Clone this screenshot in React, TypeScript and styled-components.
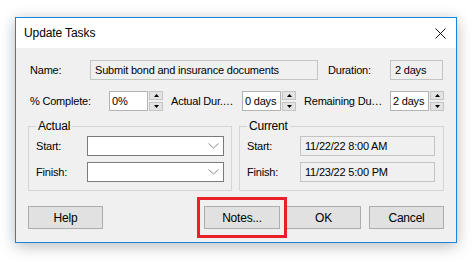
import styled, { createGlobalStyle } from "styled-components"

const GlobalStyle = createGlobalStyle`
  html, body {
    margin: 0;
    padding: 0;
    background: #ffffff;
  }
  body {
    font-family: "Liberation Sans", Arial, sans-serif;
    font-size: 11px;
    letter-spacing: -0.2px;
    color: #000;
  }
`

const Page = styled.div`
  padding: 17px 0 0 15px;
  height: 264px;
  box-sizing: border-box;
`

const Dialog = styled.div`
  width: 442px;
  height: 226px;
  box-sizing: border-box;
  border: 1px solid #1a84d8;
  background: #f0f0f0;
  box-shadow: 0 3px 14px rgba(0, 0, 0, 0.28);
  display: flex;
  flex-direction: column;
`

const TitleBar = styled.div`
  height: 30px;
  background: #ffffff;
  display: flex;
  align-items: center;
  justify-content: space-between;
  padding: 0 10px 0 8px;
  font-size: 12px;
  letter-spacing: -0.1px;
`

const Body = styled.div`
  flex: 1;
  padding: 12px 12px 0 12px;
  display: flex;
  flex-direction: column;
`

const Row = styled.div<{ $mt?: number }>`
  display: flex;
  align-items: center;
  height: 20px;
  padding-left: 2px;
  margin-top: ${p => p.$mt ?? 0}px;
`

const Label = styled.span<{ $w: number; $ml?: number }>`
  width: ${p => p.$w}px;
  margin-left: ${p => p.$ml ?? 0}px;
  white-space: nowrap;
  flex-shrink: 0;
`

const ReadOnly = styled.div<{ $w: number }>`
  width: ${p => p.$w}px;
  height: 20px;
  box-sizing: border-box;
  border: 1px solid #c4c4c4;
  background: #f0f0f0;
  padding-left: 4px;
  display: flex;
  align-items: center;
  white-space: nowrap;
  flex-shrink: 0;
`

const Spin = styled.div`
  display: flex;
  gap: 1px;
  width: 54px;
  height: 20px;
  flex-shrink: 0;
`

const SpinText = styled.div`
  width: 39px;
  box-sizing: border-box;
  border: 1px solid #b3b3b3;
  background: #fff;
  padding-left: 2px;
  display: flex;
  align-items: center;
  white-space: nowrap;
`

const SpinButtons = styled.div`
  width: 14px;
  display: flex;
  flex-direction: column;
  justify-content: space-between;
`

const SpinButton = styled.div`
  height: 9px;
  box-sizing: border-box;
  border: 1px solid #c4c4c4;
  background: #e3e3e3;
  display: flex;
  align-items: center;
  justify-content: center;
`

const Groups = styled.div`
  display: flex;
  gap: 7px;
  margin-top: 9px;
`

const Group = styled.fieldset<{ $w: number; $pr: number }>`
  width: ${p => p.$w}px;
  box-sizing: border-box;
  margin: 0;
  border: 1px solid #d5d5d5;
  padding: 3px ${p => p.$pr}px 8px 7px;
  display: grid;
  grid-template-columns: 1fr auto;
  row-gap: 6px;
  align-items: center;

  legend {
    padding: 0 2px;
    margin-left: 0;
    font-size: 12px;
    line-height: 13px;
  }
`

const Combo = styled.div`
  width: 137px;
  height: 20px;
  box-sizing: border-box;
  border: 1px solid #7a7a7a;
  background: #fff;
  display: flex;
  align-items: center;
  justify-content: flex-end;
  padding-right: 4px;
`

const Buttons = styled.div`
  display: flex;
  align-items: center;
  margin-top: 15px;
`

const Button = styled.div<{ $ml?: number; $w?: number }>`
  width: ${p => p.$w ?? 75}px;
  height: 23px;
  box-sizing: border-box;
  margin-left: ${p => p.$ml ?? 0}px;
  border: 1px solid #adadad;
  background: #e1e1e1;
  display: flex;
  align-items: center;
  justify-content: center;
  font-size: 12px;
`

const Highlight = styled.div`
  position: relative;
  margin-left: 101px;

  &::after {
    content: "";
    position: absolute;
    inset: -9px -7px;
    border: 3px solid #e8202a;
  }
`

function Arrow({ up }: { up?: boolean }) {
  return (
    <svg width="5" height="3" viewBox="0 0 5 3">
      <polygon points={up ? "2.5,0 5,3 0,3" : "0,0 5,0 2.5,3"} fill="#000" />
    </svg>
  )
}

function SpinBox({ value }: { value: string }) {
  return (
    <Spin>
      <SpinText>{value}</SpinText>
      <SpinButtons>
        <SpinButton><Arrow up /></SpinButton>
        <SpinButton><Arrow /></SpinButton>
      </SpinButtons>
    </Spin>
  )
}

function Chevron() {
  return (
    <svg width="11" height="6" viewBox="0 0 11 6">
      <polyline points="0.5,0.5 5.5,5 10.5,0.5" fill="none" stroke="#8a8a8a" strokeWidth="1" />
    </svg>
  )
}

export default function App() {
  return (
    <>
      <GlobalStyle />
      <Page>
        <Dialog>
          <TitleBar>
            <span>Update Tasks</span>
            <svg width="11" height="11" viewBox="0 0 11 11">
              <path d="M0.5 0.5 L10.5 10.5 M10.5 0.5 L0.5 10.5" stroke="#111" strokeWidth="1" />
            </svg>
          </TitleBar>
          <Body>
            <Row>
              <Label $w={60}>Name:</Label>
              <ReadOnly $w={228}>Submit bond and insurance documents</ReadOnly>
              <Label $w={62} $ml={10}>Duration:</Label>
              <ReadOnly $w={53}>2 days</ReadOnly>
            </Row>
            <Row $mt={11}>
              <Label $w={79}>% Complete:</Label>
              <SpinBox value="0%" />
              <Label $w={71} $ml={8}>Actual Dur.…</Label>
              <SpinBox value="0 days" />
              <Label $w={86} $ml={8}>Remaining Du…</Label>
              <SpinBox value="2 days" />
            </Row>
            <Groups>
              <Group $w={204} $pr={7}>
                <legend>Actual</legend>
                <span>Start:</span>
                <Combo><Chevron /></Combo>
                <span>Finish:</span>
                <Combo><Chevron /></Combo>
              </Group>
              <Group $w={205} $pr={8}>
                <legend>Current</legend>
                <span>Start:</span>
                <ReadOnly $w={135}>11/22/22 8:00 AM</ReadOnly>
                <span>Finish:</span>
                <ReadOnly $w={135}>11/23/22 5:00 PM</ReadOnly>
              </Group>
            </Groups>
            <Buttons>
              <Button>Help</Button>
              <Highlight>
                <Button $w={76}>Notes...</Button>
              </Highlight>
              <Button $ml={6}>OK</Button>
              <Button $ml={8}>Cancel</Button>
            </Buttons>
          </Body>
        </Dialog>
      </Page>
    </>
  )
}
